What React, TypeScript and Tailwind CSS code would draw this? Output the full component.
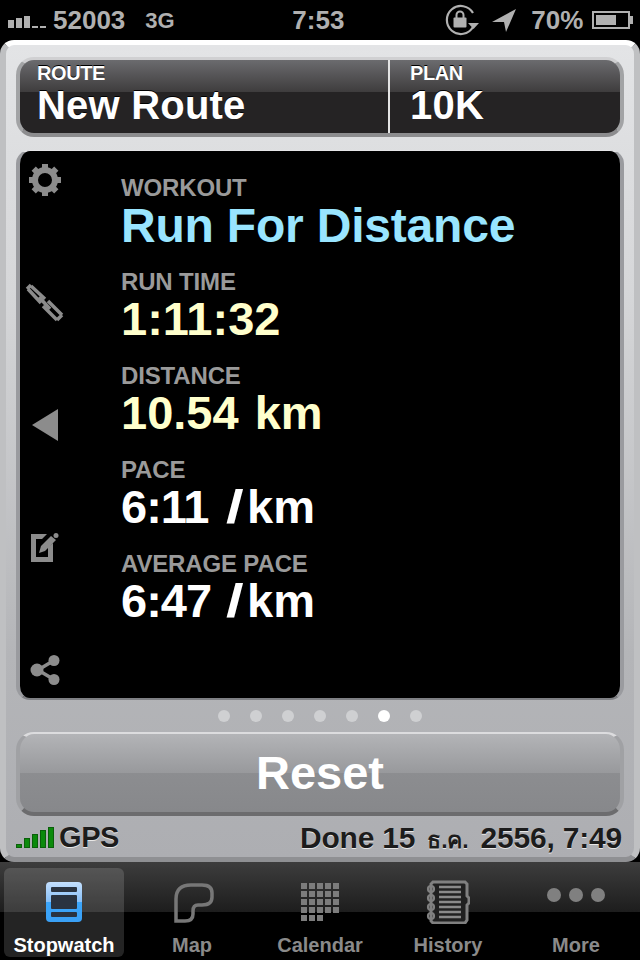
import { ReactNode } from "react";

const metrics = [
  { label: "RUN TIME", value: "1:11:32", color: "text-[#ffffcc]" },
  { label: "DISTANCE", value: "10.54 km", color: "text-[#ffffcc]" },
  { label: "PACE", value: "6:11 /km", color: "text-white" },
  { label: "AVERAGE PACE", value: "6:47 /km", color: "text-white" },
];

function StatusBar() {
  return (
    <div className="h-10 bg-black text-[#b0b0b0] font-bold flex items-center pl-2 pr-[6px]">
      <div className="flex items-end gap-[2px] h-[12px] w-[38px] mt-[4px]">
        <span className="w-[6px] h-[8px] bg-[#b0b0b0]" />
        <span className="w-[6px] h-[10px] bg-[#b0b0b0]" />
        <span className="w-[6px] h-[12px] bg-[#b0b0b0]" />
        <span className="w-[6px] h-[2px] bg-[#b0b0b0]" />
        <span className="w-[6px] h-[2px] bg-[#b0b0b0]" />
      </div>
      <span className="text-[26px] ml-[7px]">52003</span>
      <span className="text-[22px] ml-[20px] w-[147px]">3G</span>
      <span className="text-[26px] w-[152px]">7:53</span>
      <svg width="36" height="32" viewBox="0 0 36 32" className="mr-[12px]" fill="none">
        <path d="M29 9A14 14 0 1 0 29 23" stroke="#b0b0b0" strokeWidth="2.2" />
        <path d="M24 19h11l-5.500 6z" fill="#b0b0b0" />
        <rect x="9.500" y="13.500" width="13" height="10" rx="1" fill="#b0b0b0" />
        <path d="M12.500 14v-3a3.500 3.500 0 0 1 7 0v3" stroke="#b0b0b0" strokeWidth="2" />
      </svg>
      <svg width="24" height="24" viewBox="0 0 24 24" className="mr-[15px]">
        <path d="M24 1L0 14h12l2 10z" fill="#b0b0b0" />
      </svg>
      <span className="text-[26px] mr-[9px]">70%</span>
      <div className="flex items-center">
        <div className="w-[38px] h-[18px] border-2 border-[#b0b0b0] p-[2px]">
          <div className="w-[20px] h-full bg-[#b0b0b0]" />
        </div>
        <div className="w-[3px] h-[8px] bg-[#b0b0b0]" />
      </div>
    </div>
  );
}

function HeaderCell({ label, value, className }: { label: string; value: string; className: string }) {
  return (
    <div className={className}>
      <div className="text-[20px] leading-[20px] font-bold tracking-[-0.4px] [text-shadow:0_-1px_0_#000]">{label}</div>
      <div className="text-[40px] leading-[44px] font-bold tracking-[0.2px] [text-shadow:0_-1px_0_#000]">{value}</div>
    </div>
  );
}

function SideIcon({ children }: { children: ReactNode }) {
  return <div className="w-[40px] h-[40px] flex items-center justify-center">{children}</div>;
}

function SideIcons() {
  return (
    <div className="w-[101px] shrink-0 pl-[5px] pt-[9px] pb-[8px] flex flex-col justify-between">
      <SideIcon>
        <svg width="34" height="34" viewBox="0 0 34 34" fill="none">
          <circle cx="17" cy="17" r="10" stroke="#8c8c8c" strokeWidth="6" />
          <path
            d="M17 1v6M17 27v6M1 17h6M27 17h6M5.700 5.700l4.200 4.200M24.100 24.100l4.200 4.200M28.300 5.700l-4.200 4.200M9.900 24.100l-4.200 4.200"
            stroke="#8c8c8c"
            strokeWidth="6"
          />
        </svg>
      </SideIcon>
      <SideIcon>
        <svg width="50" height="50" viewBox="0 0 50 50" fill="none" stroke="#8c8c8c" strokeWidth="3.500" className="shrink-0">
          <path d="M11 8l14 13M8 11l13 14M7 11l4-4" />
          <path d="M19 19l11 12" />
          <path d="M28 23l14 14M23 28l14 14M37 42l5-5" />
        </svg>
      </SideIcon>
      <SideIcon>
        <svg width="26" height="32" viewBox="0 0 26 32">
          <path d="M26 0v32L0 16z" fill="#8c8c8c" />
        </svg>
      </SideIcon>
      <SideIcon>
        <svg width="28" height="30" viewBox="0 0 28 30" fill="#8c8c8c">
          <path d="M0 1h16l-5 5H5v18h12V14l5-4v19H0z" />
          <path d="M8 20l2-7L20 3l5 4-11 11z" />
          <circle cx="25" cy="2.500" r="2.500" />
        </svg>
      </SideIcon>
      <SideIcon>
        <svg width="30" height="30" viewBox="0 0 30 30" fill="#8c8c8c" stroke="#8c8c8c">
          <path d="M8 15L23 6M8 15l15 9" strokeWidth="3.500" fill="none" />
          <circle cx="7" cy="15" r="6.500" stroke="none" />
          <circle cx="24" cy="5.500" r="5.500" stroke="none" />
          <circle cx="24" cy="24.500" r="5.500" stroke="none" />
        </svg>
      </SideIcon>
    </div>
  );
}

function StatBlock({ label, value, color }: { label: string; value: string; color: string }) {
  const [num, unit] = value.split("/");
  return (
    <div className="h-[94px]">
      <div className="text-[24px] leading-[26px] font-bold text-[#9a9a9a] tracking-[-0.15px]">{label}</div>
      <div className={`text-[47px] leading-[48px] font-bold [word-spacing:3px] ${color}`}>
        {unit ? (
          <>
            <span className="inline-block w-[105px] tracking-[-1px]">{num.trim()}</span>
            <span className="inline-block w-[14px] mr-[7px] origin-left scale-x-[1.35]">/</span>
            {unit}
          </>
        ) : (
          value
        )}
      </div>
    </div>
  );
}

function Tab({ label, active, children }: { label: string; active?: boolean; children: ReactNode }) {
  return (
    <div className="px-1 pt-[6px] pb-1 h-full">
      <div
        className={`h-full rounded-[6px] flex flex-col items-center ${
          active ? "bg-white/[.14] text-white" : "text-[#8a8a8a]"
        }`}
      >
        <div className="h-[65px] flex items-center justify-center pt-[2px]">{children}</div>
        <div className="text-[20px] leading-[24px] font-bold">{label}</div>
      </div>
    </div>
  );
}

export default function App() {
  return (
    <div className="w-[640px] h-[960px] overflow-hidden bg-black font-['Liberation_Sans','Noto_Sans',sans-serif]">
      <StatusBar />

      {/* main panel */}
      <div className="h-[822px] rounded-[14px] border-t-[5px] border-x-[6px] border-b-[5px] border-t-white border-x-[#bfc0c2] border-b-[#8f9093] bg-[linear-gradient(#e3e4e6,#d6d7d9_30%,#b4b5b8_75%,#adaeb2)] px-[10px] pt-[12px] flex flex-col">
        <div className="h-[80px] shrink-0 rounded-[18px] border-x-4 border-t-[3px] border-b-4 border-x-[#a2a3a5] border-t-[#d0d0d2] border-b-[#8c8c8e] text-white flex overflow-hidden bg-[linear-gradient(#6b6b6e,#3e3c3d_44%,#252324_44%,#252324)]">
          <HeaderCell label="ROUTE" value="New Route" className="w-[370px] pl-[17px] pt-[3px] border-r-2 border-[#e4e4e4]" />
          <HeaderCell label="PLAN" value="10K" className="flex-1 pl-[20px] pt-[3px]" />
        </div>

        <div className="mt-[13px] h-[550px] shrink-0 rounded-[14px] bg-black border-x-4 border-t border-b-2 border-x-[#9a9b9f] border-t-[#e6e6e8] border-b-[#7f8084] flex overflow-hidden">
          <SideIcons />
          <div className="pt-[24px]">
            <div className="text-[24px] leading-[26px] font-bold text-[#9a9a9a] tracking-[-0.15px]">WORKOUT</div>
            <div className="text-[48px] leading-[48px] font-bold text-[#99e5ff] tracking-[-0.2px] h-[67px] mt-[1px]">
              Run For Distance
            </div>
            {metrics.map((m) => (
              <StatBlock key={m.label} {...m} />
            ))}
          </div>
        </div>

        <div className="h-[32px] shrink-0 flex items-center justify-center gap-5">
          {[0, 1, 2, 3, 4, 5, 6].map((i) => (
            <span key={i} className={i === 5 ? "w-3 h-3 rounded-full bg-white" : "w-3 h-3 rounded-full bg-[#cfd0d2]"} />
          ))}
        </div>

        <div className="h-[84px] shrink-0 rounded-[18px] border-x-4 border-t-2 border-b-4 border-x-[#a0a1a4] border-t-[#dcdcde] border-b-[#6c6c6e] bg-[linear-gradient(#b3b4b7,#98999c_50%,#8c8d90_50%,#87888b)] flex items-center justify-center text-white text-[47px] font-bold">
          Reset
        </div>

        <div className="flex-1 pt-[2px] flex items-center justify-between text-[#1c1c1c] font-bold leading-none [text-shadow:0_1px_0_#e8e8e8]">
          <div className="flex items-center text-[29px] tracking-[-0.4px]">
            <div className="flex items-end gap-[2px] mr-[5px]">
              {[4, 10, 14, 18, 21].map((h) => (
                <span key={h} className="w-[6px] bg-[#0b8a0b] border border-[#0a5f0a]" style={{ height: h }} />
              ))}
            </div>
            GPS
          </div>
          <div className="whitespace-nowrap text-[30px] tracking-[-0.2px] leading-none mr-[2px]">
            Done 15 <span className="text-[23px] leading-none font-bold mx-[4px]">ธ.ค.</span> 2556, 7:49
          </div>
        </div>
      </div>

      {/* tab bar */}
      <div className="h-[98px] grid grid-cols-5 bg-[linear-gradient(#3d3d3d,#1d1d1d_51%,#000_51%)]">
        <Tab label="Stopwatch" active>
          <div className="w-[36px] h-[40px] rounded-[4px] bg-[linear-gradient(#c4dffd,#86bff8_50%,#3ba6fb_50%,#3aa0f5)] p-[5px] flex flex-col gap-[3px]">
            <div className="h-[5px] rounded-[1px] bg-[#2a3340]" />
            <div className="flex-1 rounded-[1px] bg-[#2a3340]" />
            <div className="h-[5px] rounded-[1px] bg-[#2a3340]" />
          </div>
        </Tab>
        <Tab label="Map">
          <svg width="42" height="44" viewBox="0 0 42 44" fill="none" className="ml-[3px]">
            <path
              d="M3 41V19Q3 5 18 5h11q10 0 10 8v4q0 8-10 8h-4q-5 0-5 6v3q0 7-8 7z"
              stroke="#777777"
              strokeWidth="3.500"
            />
          </svg>
        </Tab>
        <Tab label="Calendar">
          <div className="grid grid-cols-5 gap-[2px] w-[38px]">
            {Array.from({ length: 23 }, (_, i) => (
              <span key={i} className="h-[6px] bg-[#7c7c7c]" />
            ))}
          </div>
        </Tab>
        <Tab label="History">
          <svg width="44" height="44" viewBox="0 0 44 44" fill="none">
            <path
              d="M7 2h32l2 2v12l2 2v5l-2 2v15l-2 3H7l-2-2V4z"
              fill="#202020"
              stroke="#808080"
              strokeWidth="3"
            />
            <path
              d="M13 7h22M13 12h22M13 17h22M13 22h22M13 27h22M13 32h22M13 37h22"
              stroke="#8a8a8a"
              strokeWidth="2.500"
            />
            <g stroke="#808080" strokeWidth="2.200">
              <circle cx="5" cy="9" r="3" />
              <circle cx="5" cy="18" r="3" />
              <circle cx="5" cy="27" r="3" />
              <circle cx="5" cy="36" r="3" />
            </g>
          </svg>
        </Tab>
        <Tab label="More">
          <div className="flex gap-2 -mt-[14px]">
            <span className="w-[14px] h-[14px] rounded-full bg-[#808080]" />
            <span className="w-[14px] h-[14px] rounded-full bg-[#808080]" />
            <span className="w-[14px] h-[14px] rounded-full bg-[#808080]" />
          </div>
        </Tab>
      </div>
    </div>
  );
}
